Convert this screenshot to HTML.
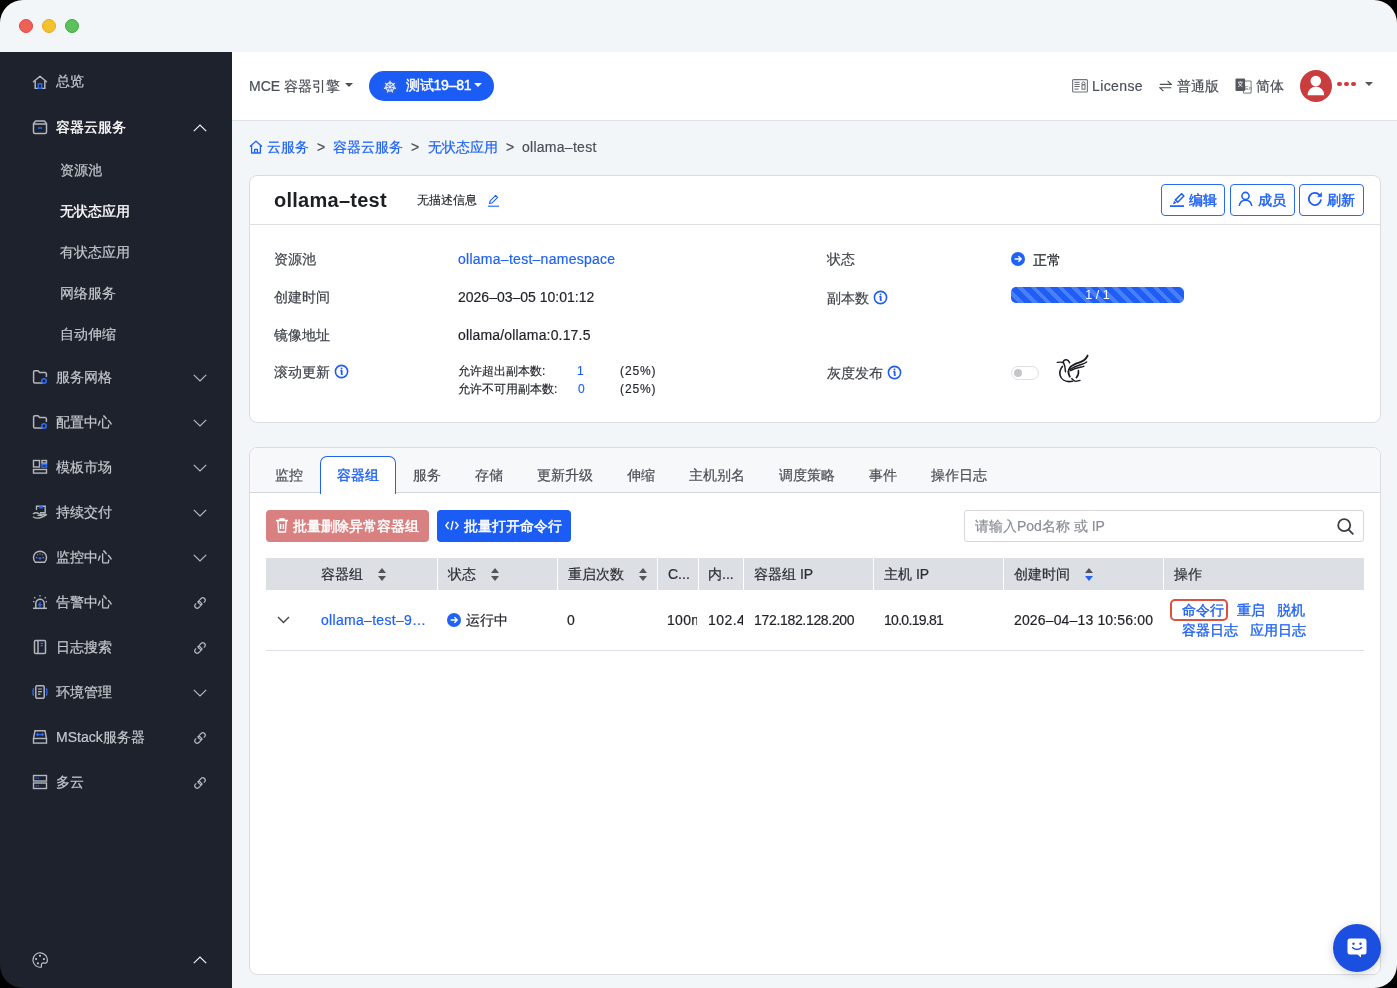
<!DOCTYPE html>
<html><head><meta charset="utf-8">
<style>
*{box-sizing:border-box;margin:0;padding:0}
html,body{width:1397px;height:988px;overflow:hidden;background:#000;font-family:"Liberation Sans",sans-serif;}
#win{position:absolute;left:0;top:0;width:1397px;height:988px;will-change:transform;border-radius:23px;overflow:hidden;background:transparent;}
#mainbg{position:absolute;left:232px;top:52px;width:1165px;height:936px;background:#f3f6f9}
#titlebar{position:absolute;left:0;top:0;width:1397px;height:52px;background:#f3f6f9;}
.tl{position:absolute;top:19px;width:14px;height:14px;border-radius:50%;}
#side{position:absolute;left:0;top:52px;width:232px;height:936px;background:#1e222d;}
#side .abs{margin-top:-52px}
.abs{position:absolute;white-space:nowrap}
.st{font-size:14px;line-height:20px;-webkit-text-stroke:0.2px currentColor}
#header{position:absolute;left:232px;top:52px;width:1165px;height:69px;background:#fff;border-bottom:1px solid #dfe3e8;}
.t14{font-size:14px;line-height:20px;-webkit-text-stroke:0.2px currentColor}
.t12{font-size:12px;line-height:18px;-webkit-text-stroke:0.15px currentColor}
.caret{position:absolute;width:0;height:0;border-left:4px solid transparent;border-right:4px solid transparent;border-top:4.5px solid #4b5058;}
.card{background:#fff;border:1px solid #d9dce1;border-radius:8px;}
.abtn{position:absolute;height:32px;border:1px solid #2a68f6;border-radius:4px;background:#fff;color:#1f62f5;font-size:14px;line-height:20px;-webkit-text-stroke:0.45px currentColor}
.lab{color:#3f434a}
.val{color:#1f2227}
.tab{color:#4a4e55}
.th{color:#2b2e33}
.info{position:absolute;width:14px;height:14px;border:1.5px solid #1f62f5;border-radius:50%}
.info::before{content:"";position:absolute;left:4.75px;top:1.8px;width:1.6px;height:1.6px;background:#1f62f5;border-radius:50%}
.info::after{content:"";position:absolute;left:4.85px;top:4.6px;width:1.4px;height:5px;background:#1f62f5}
.vsep{position:absolute;top:558px;width:1.5px;height:32px;background:#fff}
.sort{position:absolute;width:8px;height:14px}
.sort::before{content:"";position:absolute;left:0;top:1px;border-left:4px solid transparent;border-right:4px solid transparent;border-bottom:5px solid #555}
.sort::after{content:"";position:absolute;left:0;top:8.5px;border-left:4px solid transparent;border-right:4px solid transparent;border-top:5px solid #555}
.sort.act::after{border-top-color:#1f62f5}
.med{-webkit-text-stroke:0.45px currentColor}

</style></head>
<body>
<div id="win">
  <div id="mainbg"></div>
  <div id="titlebar">
    <div class="tl" style="left:19px;background:#ee6159;border:1px solid #e2463f"></div>
    <div class="tl" style="left:42px;background:#f4c12f;border:1px solid #e3ab1a"></div>
    <div class="tl" style="left:65px;background:#5cc05b;border:1px solid #36ad35"></div>
  </div>
  <div id="side">
<svg class="abs" style="left:32px;top:73px" width="16" height="16" viewBox="0 0 16 16" fill="none"><g transform="translate(0 2)"><path d="M1.5 6.8 L8 1.2 L14.5 6.8" stroke="#b3b6bc" stroke-width="1.5" stroke-linejoin="round" stroke-linecap="round"/><path d="M3.2 5.6 V13.6 H12.8 V5.6" stroke="#b3b6bc" stroke-width="1.5"/><rect x="6.3" y="8.8" width="3.4" height="4.6" stroke="#2f6bf5" stroke-width="1.4"/></g></svg>
<div class="abs st" style="left:56px;top:71px;color:#c4c7cd;">总览</div>
<svg class="abs" style="left:32px;top:119px" width="16" height="16" viewBox="0 0 16 16" fill="none"><path d="M3.6 2 H12.4 L14.5 4.6 V13 a1.5 1.5 0 0 1 -1.5 1.5 H3 a1.5 1.5 0 0 1 -1.5 -1.5 V4.6 Z" stroke="#b3b6bc" stroke-width="1.5" stroke-linejoin="round"/><path d="M1.5 5 H14.5" stroke="#b3b6bc" stroke-width="1.4"/><path d="M6 9 H10" stroke="#2f6bf5" stroke-width="1.6"/></svg>
<div class="abs st" style="left:56px;top:117px;color:#ffffff;-webkit-text-stroke:0.35px currentColor;">容器云服务</div>
<svg class="abs" style="left:193px;top:124px" width="14" height="8" viewBox="0 0 14 8" fill="none"><path d="M0.8 7.2 L7 1 L13.2 7.2" stroke="#eceef0" stroke-width="1.2"/></svg>
<div class="abs st" style="left:60px;top:160px;color:#c4c7cd;">资源池</div>
<div class="abs st" style="left:60px;top:201px;color:#ffffff;-webkit-text-stroke:0.35px currentColor;">无状态应用</div>
<div class="abs st" style="left:60px;top:242px;color:#c4c7cd;">有状态应用</div>
<div class="abs st" style="left:60px;top:283px;color:#c4c7cd;">网络服务</div>
<div class="abs st" style="left:60px;top:324px;color:#c4c7cd;">自动伸缩</div>
<svg class="abs" style="left:32px;top:369px" width="16" height="16" viewBox="0 0 16 16" fill="none"><path d="M11 14 H2.8 a1.2 1.2 0 0 1 -1.2 -1.2 V3 a1.2 1.2 0 0 1 1.2 -1.2 H6 L7.6 3.6 H13.2 a1.2 1.2 0 0 1 1.2 1.2 V8" stroke="#b3b6bc" stroke-width="1.5"/><circle cx="12" cy="12" r="2.2" stroke="#2f6bf5" stroke-width="1.6"/></svg>
<div class="abs st" style="left:56px;top:367px;color:#c4c7cd;">服务网格</div>
<svg class="abs" style="left:193px;top:374px" width="14" height="8" viewBox="0 0 14 8" fill="none"><path d="M0.8 0.8 L7 7 L13.2 0.8" stroke="#b9bcc3" stroke-width="1.15"/></svg>
<svg class="abs" style="left:32px;top:414px" width="16" height="16" viewBox="0 0 16 16" fill="none"><path d="M11 14 H2.8 a1.2 1.2 0 0 1 -1.2 -1.2 V3 a1.2 1.2 0 0 1 1.2 -1.2 H6 L7.6 3.6 H13.2 a1.2 1.2 0 0 1 1.2 1.2 V8" stroke="#b3b6bc" stroke-width="1.5"/><circle cx="12" cy="12" r="2.2" stroke="#2f6bf5" stroke-width="1.6"/></svg>
<div class="abs st" style="left:56px;top:412px;color:#c4c7cd;">配置中心</div>
<svg class="abs" style="left:193px;top:419px" width="14" height="8" viewBox="0 0 14 8" fill="none"><path d="M0.8 0.8 L7 7 L13.2 0.8" stroke="#b9bcc3" stroke-width="1.15"/></svg>
<svg class="abs" style="left:32px;top:459px" width="16" height="16" viewBox="0 0 16 16" fill="none"><rect x="1.5" y="1.5" width="6" height="6.5" stroke="#b3b6bc" stroke-width="1.4"/><rect x="10" y="1.5" width="4.5" height="2.6" stroke="#b3b6bc" stroke-width="1.4"/><rect x="10" y="5.6" width="4.5" height="2.6" stroke="#2f6bf5" stroke-width="1.4"/><rect x="1.5" y="10.5" width="13" height="3.6" stroke="#b3b6bc" stroke-width="1.4"/></svg>
<div class="abs st" style="left:56px;top:457px;color:#c4c7cd;">模板市场</div>
<svg class="abs" style="left:193px;top:464px" width="14" height="8" viewBox="0 0 14 8" fill="none"><path d="M0.8 0.8 L7 7 L13.2 0.8" stroke="#b9bcc3" stroke-width="1.15"/></svg>
<svg class="abs" style="left:32px;top:504px" width="16" height="16" viewBox="0 0 16 16" fill="none"><path d="M4.5 6 V2.2 H13.2 V8.8 H8" stroke="#b3b6bc" stroke-width="1.4"/><rect x="7.2" y="1.6" width="3.6" height="2.8" fill="#2f6bf5"/><path d="M1.4 9.6 C3 8.6 5 8.6 6.8 9.6 L9.5 10.4 M1.4 13 C4 14.6 8 14.8 14.2 10.8 C12.6 9.6 11.4 10.4 9.6 11.4 H6" stroke="#b3b6bc" stroke-width="1.4" stroke-linecap="round"/></svg>
<div class="abs st" style="left:56px;top:502px;color:#c4c7cd;">持续交付</div>
<svg class="abs" style="left:193px;top:509px" width="14" height="8" viewBox="0 0 14 8" fill="none"><path d="M0.8 0.8 L7 7 L13.2 0.8" stroke="#b9bcc3" stroke-width="1.15"/></svg>
<svg class="abs" style="left:32px;top:549px" width="16" height="16" viewBox="0 0 16 16" fill="none"><path d="M3.3 13.2 A6.5 6.5 0 1 1 12.7 13.2 Z" stroke="#b3b6bc" stroke-width="1.45" stroke-linejoin="round"/><circle cx="8" cy="9.2" r="1.3" fill="#2f6bf5"/><path d="M4.3 8.6 h1 M10.7 8.6 h1 M8 4.4 v1 M5.2 5.6 l0.6 0.6 M10.8 5.6 l-0.6 0.6" stroke="#b3b6bc" stroke-width="1.1"/></svg>
<div class="abs st" style="left:56px;top:547px;color:#c4c7cd;">监控中心</div>
<svg class="abs" style="left:193px;top:554px" width="14" height="8" viewBox="0 0 14 8" fill="none"><path d="M0.8 0.8 L7 7 L13.2 0.8" stroke="#b9bcc3" stroke-width="1.15"/></svg>
<svg class="abs" style="left:32px;top:594px" width="16" height="16" viewBox="0 0 16 16" fill="none"><path d="M3.8 14 V9.5 a4.2 4.2 0 0 1 8.4 0 V14" stroke="#b3b6bc" stroke-width="1.5"/><path d="M1 14.3 H15" stroke="#b3b6bc" stroke-width="1.5"/><path d="M8.6 8.2 L6.9 10.8 H9.1 L7.4 13" stroke="#2f6bf5" stroke-width="1.2"/><path d="M8 1 V2.6 M2.2 3.2 L3.3 4.3 M13.8 3.2 L12.7 4.3 M1 7.6 H2.4 M13.6 7.6 H15" stroke="#b3b6bc" stroke-width="1.3"/></svg>
<div class="abs st" style="left:56px;top:592px;color:#c4c7cd;">告警中心</div>
<svg class="abs" style="left:194px;top:596.5px;overflow:visible" width="12" height="12" viewBox="0 0 12 12" fill="none"><rect x="-2.4" y="-3.7" width="4.8" height="7.4" rx="2.4" transform="translate(7.9 4.1) rotate(45)" stroke="#b4b7bd" stroke-width="1.15"/><rect x="-2.4" y="-3.7" width="4.8" height="7.4" rx="2.4" transform="translate(4.1 7.9) rotate(45)" stroke="#b4b7bd" stroke-width="1.15"/><path d="M8.68 6.72L9.82 5.58M2.18 6.42L3.32 5.28" stroke="#1e222d" stroke-width="1.9"/></svg>
<svg class="abs" style="left:32px;top:639px" width="16" height="16" viewBox="0 0 16 16" fill="none"><rect x="2.5" y="1.5" width="11" height="13" rx="1" stroke="#b3b6bc" stroke-width="1.5"/><path d="M6 1.5 V14.5" stroke="#b3b6bc" stroke-width="1.5"/><path d="M8.6 4.4 H11 M8.6 6.6 H11" stroke="#2f6bf5" stroke-width="1.3"/></svg>
<div class="abs st" style="left:56px;top:637px;color:#c4c7cd;">日志搜索</div>
<svg class="abs" style="left:194px;top:641.5px;overflow:visible" width="12" height="12" viewBox="0 0 12 12" fill="none"><rect x="-2.4" y="-3.7" width="4.8" height="7.4" rx="2.4" transform="translate(7.9 4.1) rotate(45)" stroke="#b4b7bd" stroke-width="1.15"/><rect x="-2.4" y="-3.7" width="4.8" height="7.4" rx="2.4" transform="translate(4.1 7.9) rotate(45)" stroke="#b4b7bd" stroke-width="1.15"/><path d="M8.68 6.72L9.82 5.58M2.18 6.42L3.32 5.28" stroke="#1e222d" stroke-width="1.9"/></svg>
<svg class="abs" style="left:32px;top:684px" width="16" height="16" viewBox="0 0 16 16" fill="none"><rect x="3.8" y="1.8" width="8.4" height="12.4" rx="1.2" stroke="#b3b6bc" stroke-width="1.5"/><path d="M6 5 H10 M6 7.6 H10 M6 10.2 H8.4" stroke="#b3b6bc" stroke-width="1.2"/><path d="M1.6 4.2 C0.8 6.6 0.8 9.4 1.6 11.8 M14.4 4.2 C15.2 6.6 15.2 9.4 14.4 11.8" stroke="#2f6bf5" stroke-width="1.3"/></svg>
<div class="abs st" style="left:56px;top:682px;color:#c4c7cd;">环境管理</div>
<svg class="abs" style="left:193px;top:689px" width="14" height="8" viewBox="0 0 14 8" fill="none"><path d="M0.8 0.8 L7 7 L13.2 0.8" stroke="#b9bcc3" stroke-width="1.15"/></svg>
<svg class="abs" style="left:32px;top:729px" width="16" height="16" viewBox="0 0 16 16" fill="none"><path d="M1.5 9.5 L3 1.8 H13 L14.5 9.5" stroke="#b3b6bc" stroke-width="1.4"/><rect x="1.5" y="9.5" width="13" height="4.6" stroke="#b3b6bc" stroke-width="1.4"/><path d="M6.2 4.2 L4.6 5.6 L6.2 7 M9.8 4.2 L11.4 5.6 L9.8 7 M5 5.6 H11" stroke="#2f6bf5" stroke-width="1.3"/></svg>
<div class="abs st" style="left:56px;top:727px;color:#c4c7cd;">MStack服务器</div>
<svg class="abs" style="left:194px;top:731.5px;overflow:visible" width="12" height="12" viewBox="0 0 12 12" fill="none"><rect x="-2.4" y="-3.7" width="4.8" height="7.4" rx="2.4" transform="translate(7.9 4.1) rotate(45)" stroke="#b4b7bd" stroke-width="1.15"/><rect x="-2.4" y="-3.7" width="4.8" height="7.4" rx="2.4" transform="translate(4.1 7.9) rotate(45)" stroke="#b4b7bd" stroke-width="1.15"/><path d="M8.68 6.72L9.82 5.58M2.18 6.42L3.32 5.28" stroke="#1e222d" stroke-width="1.9"/></svg>
<svg class="abs" style="left:32px;top:774px" width="16" height="16" viewBox="0 0 16 16" fill="none"><rect x="1.5" y="1.5" width="13" height="5.5" stroke="#b3b6bc" stroke-width="1.4"/><rect x="1.5" y="9" width="13" height="5.5" stroke="#b3b6bc" stroke-width="1.4"/><path d="M3.6 4.25 H4.6 M5.8 4.25 H6.8 M3.6 11.75 H4.6 M5.8 11.75 H6.8" stroke="#2f6bf5" stroke-width="1.3"/></svg>
<div class="abs st" style="left:56px;top:772px;color:#c4c7cd;">多云</div>
<svg class="abs" style="left:194px;top:776.5px;overflow:visible" width="12" height="12" viewBox="0 0 12 12" fill="none"><rect x="-2.4" y="-3.7" width="4.8" height="7.4" rx="2.4" transform="translate(7.9 4.1) rotate(45)" stroke="#b4b7bd" stroke-width="1.15"/><rect x="-2.4" y="-3.7" width="4.8" height="7.4" rx="2.4" transform="translate(4.1 7.9) rotate(45)" stroke="#b4b7bd" stroke-width="1.15"/><path d="M8.68 6.72L9.82 5.58M2.18 6.42L3.32 5.28" stroke="#1e222d" stroke-width="1.9"/></svg>
<svg class="abs" style="left:32px;top:952px" width="16" height="16" viewBox="0 0 16 16" fill="none"><path d="M9.3 15.1A7.2 7.2 0 1 1 15.2 9.4C14.9 10.9 13.4 11.4 12.2 11C10.6 10.5 9.3 11.5 9.4 13.2Z" stroke="#c3c6cc" stroke-width="1.15" stroke-linejoin="round"/><circle cx="8" cy="3.8" r="1.1" fill="#c3c6cc"/><circle cx="4.1" cy="7" r="1.1" fill="#c3c6cc"/><circle cx="11.9" cy="7" r="1.1" fill="#c3c6cc"/><circle cx="5.9" cy="11.3" r="1.1" fill="#c3c6cc"/></svg>
<svg class="abs" style="left:193px;top:956px" width="14" height="8" viewBox="0 0 14 8" fill="none"><path d="M0.8 7.2 L7 1 L13.2 7.2" stroke="#eceef0" stroke-width="1.2"/></svg>
  </div>
  <div id="header"></div>
  <!-- header left -->
  <div class="abs t14" style="left:249px;top:76px;color:#4b5058">MCE 容器引擎</div>
  <div class="caret" style="left:345px;top:83px;border-top-color:#4b5058"></div>
  <div class="abs" style="left:369px;top:71px;width:125px;height:30px;border-radius:15px;background:#1b5cf5"></div>
  <svg class="abs" style="left:382px;top:78.5px" width="16" height="16" viewBox="0 0 16 16" fill="none"><polygon points="8.00,0.40 13.94,3.26 15.41,9.69 11.30,14.85 4.70,14.85 0.59,9.69 2.06,3.26" fill="#2d5fd9" stroke="#2d5fd9" stroke-width="1.2" stroke-linejoin="round"/><circle cx="8" cy="8" r="4.1" stroke="#e9eef9" stroke-width="1.3"/><circle cx="8" cy="8" r="1.3" fill="#e9eef9"/><path d="M8.00 6.40L8.00 1.80M9.25 7.00L12.85 4.13M9.56 8.36L14.04 9.38M8.69 9.44L10.69 13.59M7.31 9.44L5.31 13.59M6.44 8.36L1.96 9.38M6.75 7.00L3.15 4.13" stroke="#e9eef9" stroke-width="1.1"/></svg>
  <div class="abs t14" style="left:405.8px;top:75.3px;color:#fff;-webkit-text-stroke:0.4px #fff;letter-spacing:-0.2px">测试19–81</div>
  <div class="caret" style="left:474px;top:83px;border-top-color:#fff"></div>
  <!-- header right -->
  <svg class="abs" style="left:1072px;top:79px" width="16" height="14" viewBox="0 0 16 14" fill="none"><rect x="0.6" y="0.6" width="14.8" height="12.4" rx="1" stroke="#707378" stroke-width="1.1"/><path d="M2.4 3.3H7.6M2.4 5.4H7.6M2.4 7.5H7.6M2.4 10.1H6.6" stroke="#5b5e63" stroke-width="0.95"/><rect x="10" y="3" width="3" height="2.8" rx="1.2" stroke="#5b5e63" stroke-width="0.9"/><rect x="10" y="5.8" width="3" height="4.4" stroke="#5b5e63" stroke-width="0.9"/></svg>
  <div class="abs t14" style="left:1092px;top:76px;color:#4b5058;letter-spacing:0.4px">License</div>
  <svg class="abs" style="left:1158.5px;top:79.5px" width="13" height="12" viewBox="0 0 13 12" fill="none"><path d="M0.8 4.3H12.2L8.6 0.8M12.2 7.7H0.8L4.4 11.2" stroke="#4b4e53" stroke-width="1.15"/></svg>
  <div class="abs t14" style="left:1177px;top:76px;color:#4b5058">普通版</div>
  <svg class="abs" style="left:1234.5px;top:78px" width="17" height="16" viewBox="0 0 17 16" fill="none"><path d="M7.8 3H16.1V15.1H8.4V12.8" stroke="#6a6d72" stroke-width="0.9" fill="#fff"/><text x="10" y="11.6" font-size="5.5" fill="#6a6d72" font-family="Liberation Sans">En</text><rect x="0.5" y="0.5" width="9.6" height="12.6" rx="1" fill="#55585d"/><path d="M3 4.2H7.6M5.3 3.2V4.2M3.6 4.6C4.2 6.6 5.6 7.9 7.4 8.6M7 4.6C6.4 6.6 5 7.9 3.2 8.6" stroke="#fff" stroke-width="0.8"/></svg>
  <div class="abs t14" style="left:1256px;top:76px;color:#4b5058">简体</div>
  <svg class="abs" style="left:1300px;top:70px" width="32" height="32" viewBox="0 0 32 32"><circle cx="16" cy="16" r="16" fill="#c93d3e"/><circle cx="15.8" cy="11" r="5.3" fill="#fff"/><path d="M7.6 25.2A8.3 8.6 0 0 1 24.2 25.2Z" fill="#fff"/></svg>
  <div class="abs" style="left:1337.2px;top:81.8px;width:4.4px;height:4.4px;border-radius:50%;background:#d13a3a"></div>
  <div class="abs" style="left:1344.3px;top:81.8px;width:4.4px;height:4.4px;border-radius:50%;background:#d13a3a"></div>
  <div class="abs" style="left:1351.2px;top:81.8px;width:4.4px;height:4.4px;border-radius:50%;background:#d13a3a"></div>
  <div class="caret" style="left:1365px;top:82px;border-top-color:#555"></div>

  <!-- breadcrumb -->
  <svg class="abs" style="left:249px;top:140px" width="14" height="14" viewBox="0 0 14 14" fill="none"><path d="M1 6.6L7 1.2L13 6.6M2.6 5.4V13H11.4V5.4M5.6 13V9.4H8.4V13" stroke="#1f62f5" stroke-width="1.3" stroke-linejoin="round"/></svg>
  <div class="abs t14" style="left:267px;top:137px;color:#1f62f5">云服务</div>
  <div class="abs t14" style="left:317px;top:137px;color:#4b5058">&gt;</div>
  <div class="abs t14" style="left:333px;top:137px;color:#1f62f5">容器云服务</div>
  <div class="abs t14" style="left:411px;top:137px;color:#4b5058">&gt;</div>
  <div class="abs t14" style="left:428px;top:137px;color:#1f62f5">无状态应用</div>
  <div class="abs t14" style="left:506px;top:137px;color:#4b5058">&gt;</div>
  <div class="abs t14" style="left:522px;top:137px;color:#4b5058;letter-spacing:0.27px">ollama–test</div>

  <!-- card 1 -->
  <div class="abs card" style="left:249px;top:175px;width:1132px;height:248px"></div>
  <div class="abs" style="left:250px;top:224px;width:1130px;height:1px;background:#dcdfe4"></div>
  <div class="abs" style="left:274px;top:186px;font-size:20px;line-height:28px;font-weight:bold;color:#1d1f23;letter-spacing:0.26px">ollama–test</div>
  <div class="abs" style="left:417px;top:191px;font-size:12px;line-height:18px;color:#1f2227;-webkit-text-stroke:0.15px currentColor">无描述信息</div>
  <svg class="abs" style="left:487px;top:194px" width="13" height="13" viewBox="0 0 13 13" fill="none"><path d="M2.5 9.5L3.2 6.8L8.6 1.4L10.6 3.4L5.2 8.8Z" stroke="#1f62f5" stroke-width="1.1" stroke-linejoin="round"/><path d="M1 12.2H12" stroke="#1f62f5" stroke-width="1.1"/></svg>

  <div class="abtn" style="left:1161px;top:184px;width:64px">
    <svg class="abs" style="left:7px;top:8px" width="16" height="15" viewBox="0 0 16 15" fill="none"><path d="M6.4 6.9L12.6 0.7L14.9 3L8.7 9.2Z" stroke="#1f5cf5" stroke-width="1.5" stroke-linejoin="round"/><path d="M3.9 11.3L5.2 7.7L7.6 10.1Z" fill="#1f5cf5"/><path d="M1 13.1H15" stroke="#1f5cf5" stroke-width="1.7"/></svg>
    <span style="position:absolute;left:27px;top:4.5px">编辑</span></div>
  <div class="abtn" style="left:1230px;top:184px;width:65px">
    <svg class="abs" style="left:7px;top:6px" width="15" height="16" viewBox="0 0 15 16" fill="none"><circle cx="7.5" cy="5" r="3.6" stroke="#1f62f5" stroke-width="1.6"/><path d="M1.2 15C1.8 11.2 4.2 9.2 7.5 9.2S13.2 11.2 13.8 15" stroke="#1f62f5" stroke-width="1.6"/></svg>
    <span style="position:absolute;left:27px;top:4.5px">成员</span></div>
  <div class="abtn" style="left:1299px;top:184px;width:65px">
    <svg class="abs" style="left:6.3px;top:6.2px" width="17" height="16" viewBox="0 0 17 16" fill="none"><path d="M14.87 9.17A6.1 6.1 0 1 1 13.4 3.8" stroke="#1f5cf5" stroke-width="1.8" stroke-linecap="round"/><path d="M15.6 1.8L15.6 5.7L11.6 5.7Z" fill="#1f5cf5" stroke="#1f5cf5" stroke-width="0.6" stroke-linejoin="round"/></svg>
    <span style="position:absolute;left:27px;top:4.5px">刷新</span></div>

  <div class="abs t14 lab" style="left:274px;top:249px">资源池</div>
  <div class="abs t14 lab" style="left:274px;top:287px">创建时间</div>
  <div class="abs t14 lab" style="left:274px;top:325px">镜像地址</div>
  <div class="abs t14 lab" style="left:274px;top:362px">滚动更新</div>
  <svg class="abs" style="left:333.5px;top:364.0px" width="15" height="15" viewBox="0 0 15 15" fill="none"><circle cx="7.5" cy="7.5" r="6.1" stroke="#1f5cf5" stroke-width="1.6"/><circle cx="7.5" cy="4.5" r="0.95" fill="#1f5cf5"/><path d="M6.3 6.7H7.9V10.5H8.7" stroke="#1f5cf5" stroke-width="1.2" stroke-linejoin="round"/><path d="M7.45 6.7V10.7" stroke="#1f5cf5" stroke-width="1.4"/></svg>
  <div class="abs t14" style="left:458px;top:249px;color:#1f62f5;letter-spacing:0.27px">ollama–test–namespace</div>
  <div class="abs t14 val" style="left:458px;top:287px">2026–03–05 10:01:12</div>
  <div class="abs t14 val" style="left:458px;top:325px;letter-spacing:0.17px">ollama/ollama:0.17.5</div>
  <div class="abs t12 val" style="left:458px;top:362px">允许超出副本数:</div>
  <div class="abs t12" style="left:577px;top:362px;color:#1f62f5">1</div>
  <div class="abs t12 val" style="left:620px;top:362px;letter-spacing:0.9px">(25%)</div>
  <div class="abs t12 val" style="left:458px;top:380px">允许不可用副本数:</div>
  <div class="abs t12" style="left:578px;top:380px;color:#1f62f5">0</div>
  <div class="abs t12 val" style="left:620px;top:380px;letter-spacing:0.9px">(25%)</div>

  <div class="abs t14 lab" style="left:827px;top:249px">状态</div>
  <div class="abs t14 lab" style="left:827px;top:288px">副本数</div>
  <svg class="abs" style="left:872.5px;top:290.0px" width="15" height="15" viewBox="0 0 15 15" fill="none"><circle cx="7.5" cy="7.5" r="6.1" stroke="#1f5cf5" stroke-width="1.6"/><circle cx="7.5" cy="4.5" r="0.95" fill="#1f5cf5"/><path d="M6.3 6.7H7.9V10.5H8.7" stroke="#1f5cf5" stroke-width="1.2" stroke-linejoin="round"/><path d="M7.45 6.7V10.7" stroke="#1f5cf5" stroke-width="1.4"/></svg>
  <div class="abs t14 lab" style="left:827px;top:363px">灰度发布</div>
  <svg class="abs" style="left:886.5px;top:365.0px" width="15" height="15" viewBox="0 0 15 15" fill="none"><circle cx="7.5" cy="7.5" r="6.1" stroke="#1f5cf5" stroke-width="1.6"/><circle cx="7.5" cy="4.5" r="0.95" fill="#1f5cf5"/><path d="M6.3 6.7H7.9V10.5H8.7" stroke="#1f5cf5" stroke-width="1.2" stroke-linejoin="round"/><path d="M7.45 6.7V10.7" stroke="#1f5cf5" stroke-width="1.4"/></svg>
  <svg class="abs" style="left:1011px;top:252px" width="14" height="14" viewBox="0 0 14 14"><circle cx="7" cy="7" r="7" fill="#1f62f5"/><path d="M3.6 7H10M7.4 4.2L10.2 7L7.4 9.8" stroke="#fff" stroke-width="1.4" fill="none"/></svg>
  <div class="abs t14 val" style="left:1033px;top:250px">正常</div>
  <div class="abs" style="left:1011px;top:287px;width:173px;height:16px;border-radius:5px;background:repeating-linear-gradient(45deg,#1f5ef5 0,#1f5ef5 5.6px,#4a7ff7 5.6px,#4a7ff7 9.6px);"></div>
  <div class="abs" style="left:1011px;top:287px;width:173px;height:16px;font-size:12.5px;line-height:16px;text-align:center;color:#fff;letter-spacing:0px;padding-left:0px">1 / 1</div>
  <div class="abs" style="left:1011px;top:366px;width:28px;height:14px;border-radius:7px;background:#fff;border:1px solid #dcdfe4"></div>
  <div class="abs" style="left:1014px;top:369px;width:8px;height:8px;border-radius:50%;background:#c4c6ca"></div>
  <svg class="abs" style="left:1050px;top:350px" width="45" height="38" viewBox="0 0 45 38" fill="none" stroke="#1a1c20" stroke-linecap="round">
<path d="M7.3 12.4C9.5 12 11.8 12 13.4 12.6" stroke-width="1.4"/>
<path d="M12.8 12.6C13.6 10.6 15 9.6 16.4 9.8C17.8 10 19 11.2 19.6 12.8" stroke-width="1.5"/>
<path d="M13.6 12.8C14.8 15 15.4 18.5 15.5 21.8" stroke-width="1.5"/>
<path d="M12.4 16.4C10.2 19 9.4 22.6 10.2 25.6C11.2 29.2 15 31.6 19 31.6C20.4 31.6 21.6 31.4 22.6 31.2" stroke-width="1.6"/>
<path d="M19.8 26.6C18.2 23.8 18.2 20 20 17.6C22 15 25 13.8 29 12.6C33 11.4 36 9.4 37.6 5.6" stroke-width="1.9"/>
<path d="M20.2 19.4C23.8 16.8 28 15.4 32 14.2C34 13.6 35.6 12.8 36.6 12" stroke-width="1.5"/>
<path d="M20.6 20.6C24 18.6 28 17.6 31.2 17C32.4 16.8 33.4 16.4 34 16.2" stroke-width="1.3"/>
<path d="M28.4 20.6C28.8 23.6 28 26 26.4 27.6" stroke-width="1.6"/>
<path d="M21.8 28.6C23.4 30 24.6 31.2 25.8 31.4C27.2 31.2 28.6 30.6 30 30.4" stroke-width="1.4"/>
</svg>

  <!-- card 2 -->
  <div class="abs card" style="left:249px;top:447px;width:1132px;height:528px"></div>
  <div class="abs" style="left:250px;top:448px;width:1130px;height:45px;background:#f7f8f9;border-radius:7px 7px 0 0"></div>
  <div class="abs" style="left:250px;top:492px;width:1130px;height:1px;background:#d3d6db"></div>
  <div class="abs" style="left:320px;top:456px;width:76px;height:38px;background:#fff;border:1.5px solid #1f62f5;border-bottom:none;border-radius:7px 7px 0 0"></div>
  <div class="abs t14 tab" style="left:275px;top:465px">监控</div>
  <div class="abs t14 tab" style="left:337px;top:465px;color:#1f62f5;-webkit-text-stroke:0.35px currentColor">容器组</div>
  <div class="abs t14 tab" style="left:413px;top:465px">服务</div>
  <div class="abs t14 tab" style="left:475px;top:465px">存储</div>
  <div class="abs t14 tab" style="left:537px;top:465px">更新升级</div>
  <div class="abs t14 tab" style="left:627px;top:465px">伸缩</div>
  <div class="abs t14 tab" style="left:689px;top:465px">主机别名</div>
  <div class="abs t14 tab" style="left:779px;top:465px">调度策略</div>
  <div class="abs t14 tab" style="left:869px;top:465px">事件</div>
  <div class="abs t14 tab" style="left:931px;top:465px">操作日志</div>

  <div class="abs" style="left:266px;top:510px;width:163px;height:32px;border-radius:4px;background:#d98080"></div>
  <svg class="abs" style="left:275px;top:518px" width="14" height="15" viewBox="0 0 14 15" fill="none"><path d="M1 2.5H13M5 2.5V1H9V2.5M2.8 2.5L3.6 14H10.4L11.2 2.5M5.6 6V11M8.4 6V11" stroke="#fff" stroke-width="1.4"/></svg>
  <div class="abs t14" style="left:293px;top:516px;color:#fff;-webkit-text-stroke:0.45px #fff">批量删除异常容器组</div>
  <div class="abs" style="left:437px;top:510px;width:134px;height:32px;border-radius:4px;background:#1b5cf5"></div>
  <svg class="abs" style="left:445px;top:520px" width="14" height="11" viewBox="0 0 14 11" fill="none"><path d="M3.6 2L0.8 5.5L3.6 9M10.4 2L13.2 5.5L10.4 9M8 1L6 10" stroke="#fff" stroke-width="1.4"/></svg>
  <div class="abs t14" style="left:464px;top:516px;color:#fff;-webkit-text-stroke:0.45px #fff">批量打开命令行</div>

  <div class="abs" style="left:964px;top:510px;width:400px;height:32px;border-radius:3px;border:1px solid #d5d8dd;background:#fff"></div>
  <div class="abs t14" style="left:975px;top:516px;color:#8a8e95">请输入Pod名称 或 IP</div>
  <svg class="abs" style="left:1337px;top:518px" width="17" height="17" viewBox="0 0 17 17" fill="none"><circle cx="7.2" cy="7.2" r="6" stroke="#3b3f45" stroke-width="1.8"/><path d="M11.6 11.6L15.8 15.8" stroke="#3b3f45" stroke-width="1.9" stroke-linecap="round"/></svg>

  <!-- table -->
  <div class="abs" style="left:266px;top:558px;width:1098px;height:32px;background:#dcdfe4"></div>
  <div class="vsep" style="left:436.5px"></div><div class="vsep" style="left:556.5px"></div><div class="vsep" style="left:656.5px"></div><div class="vsep" style="left:697.5px"></div><div class="vsep" style="left:742.5px"></div><div class="vsep" style="left:872.5px"></div><div class="vsep" style="left:1002.5px"></div><div class="vsep" style="left:1162.5px"></div>
  <div class="abs t14 th" style="left:321px;top:564px">容器组</div>
  <div class="sort" style="left:378px;top:567px"></div>
  <div class="abs t14 th" style="left:448px;top:564px">状态</div>
  <div class="sort" style="left:491px;top:567px"></div>
  <div class="abs t14 th" style="left:568px;top:564px">重启次数</div>
  <div class="sort" style="left:639px;top:567px"></div>
  <div class="abs t14 th" style="left:668px;top:564px">C...</div>
  <div class="abs t14 th" style="left:708px;top:564px">内...</div>
  <div class="abs t14 th" style="left:754px;top:564px">容器组 IP</div>
  <div class="abs t14 th" style="left:884px;top:564px">主机 IP</div>
  <div class="abs t14 th" style="left:1014px;top:564px">创建时间</div>
  <div class="sort act" style="left:1085px;top:567px"></div>
  <div class="abs t14 th" style="left:1174px;top:564px">操作</div>

  <svg class="abs" style="left:277px;top:616px" width="13" height="8" viewBox="0 0 13 8" fill="none"><path d="M1 1L6.5 6.5L12 1" stroke="#444" stroke-width="1.4"/></svg>
  <div class="abs t14" style="left:321px;top:610px;color:#1f62f5;letter-spacing:0.3px">ollama–test–9…</div>
  <svg class="abs" style="left:447px;top:613px" width="14" height="14" viewBox="0 0 14 14"><circle cx="7" cy="7" r="7" fill="#1f62f5"/><path d="M3.6 7H10M7.4 4.2L10.2 7L7.4 9.8" stroke="#fff" stroke-width="1.4" fill="none"/></svg>
  <div class="abs t14 val" style="left:466px;top:610px">运行中</div>
  <div class="abs t14 val" style="left:567px;top:610px">0</div>
  <div class="abs t14 val" style="left:667px;top:610px;width:30px;overflow:hidden;letter-spacing:0.3px">100m</div>
  <div class="abs t14 val" style="left:708px;top:610px;width:35px;overflow:hidden;letter-spacing:0.45px">102.4Mi</div>
  <div class="abs t14 val" style="left:754px;top:610px;letter-spacing:-0.32px">172.182.128.200</div>
  <div class="abs t14 val" style="left:884px;top:610px;letter-spacing:-0.7px">10.0.19.81</div>
  <div class="abs t14 val" style="left:1014px;top:610px;letter-spacing:0.15px">2026–04–13 10:56:00</div>
  <div class="abs" style="left:1170px;top:599px;width:58px;height:22px;border:2px solid #e0503f;border-radius:5px"></div>
  <div class="abs t14" style="left:1182px;top:600px;color:#1f62f5;-webkit-text-stroke:0.35px currentColor">命令行</div>
  <div class="abs t14" style="left:1237px;top:600px;color:#1f62f5;-webkit-text-stroke:0.35px currentColor">重启</div>
  <div class="abs t14" style="left:1277px;top:600px;color:#1f62f5;-webkit-text-stroke:0.35px currentColor">脱机</div>
  <div class="abs t14" style="left:1182px;top:620px;color:#1f62f5;-webkit-text-stroke:0.35px currentColor">容器日志</div>
  <div class="abs t14" style="left:1250px;top:620px;color:#1f62f5;-webkit-text-stroke:0.35px currentColor">应用日志</div>
  <div class="abs" style="left:266px;top:650px;width:1098px;height:1px;background:#dcdfe4"></div>

  <!-- chat -->
  <div class="abs" style="left:1333px;top:924px;width:48px;height:48px;border-radius:50%;background:#1b4fe0;box-shadow:0 2px 10px rgba(0,0,0,0.18)"></div>
  <svg class="abs" style="left:1347px;top:938px" width="20" height="20" viewBox="0 0 20 20"><path d="M3 0.5H17A2.5 2.5 0 0 1 19.5 3V14A2.5 2.5 0 0 1 17 16.5H14L14 19.5L10.5 16.5H3A2.5 2.5 0 0 1 0.5 14V3A2.5 2.5 0 0 1 3 0.5Z" fill="#fff"/><circle cx="6.5" cy="5.8" r="1.2" fill="#1b4fe0"/><circle cx="13.5" cy="5.8" r="1.2" fill="#1b4fe0"/><path d="M5.5 9.6C7.5 12 12.5 12 14.5 9.6" stroke="#1b4fe0" stroke-width="1.5" fill="none" stroke-linecap="round"/></svg>

</div>
</body></html>
